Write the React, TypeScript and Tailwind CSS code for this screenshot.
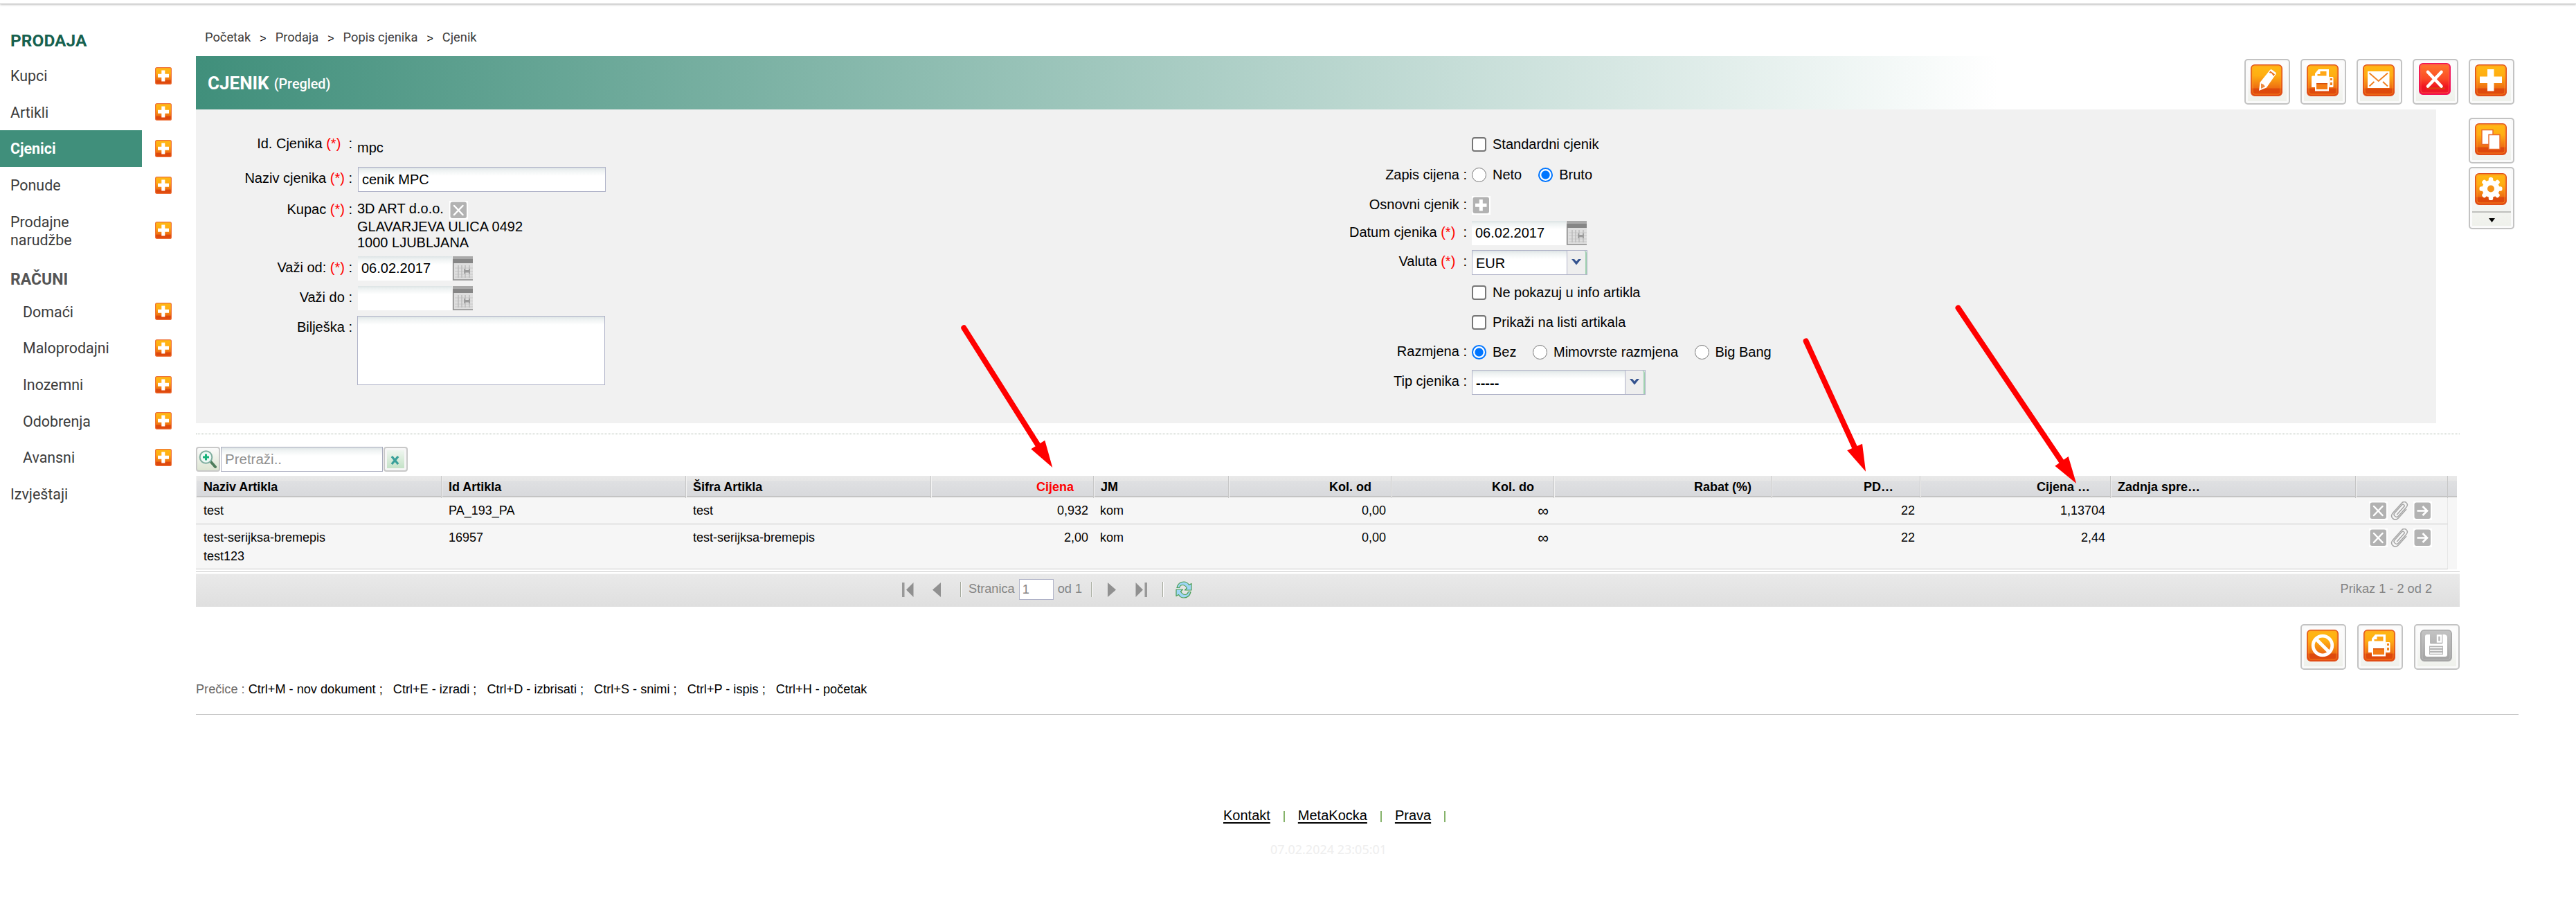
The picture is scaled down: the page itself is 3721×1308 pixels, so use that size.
import type { ReactNode } from 'react';
import clsx from 'clsx';

interface MenuItem {
  label: string;
  active?: boolean;
  indent?: boolean;
  tall?: boolean;
  noAdd?: boolean;
}

const salesMenu: MenuItem[] = [
  { label: 'Kupci' },
  { label: 'Artikli' },
  { label: 'Cjenici', active: true },
  { label: 'Ponude' },
  { label: 'Prodajne narudžbe', tall: true },
];

const invoiceMenu: MenuItem[] = [
  { label: 'Domaći', indent: true },
  { label: 'Maloprodajni', indent: true },
  { label: 'Inozemni', indent: true },
  { label: 'Odobrenja', indent: true },
  { label: 'Avansni', indent: true },
  { label: 'Izvještaji', noAdd: true },
];

const articles = [
  {
    name: ['test'],
    id: 'PA_193_PA',
    code: 'test',
    price: '0,932',
    unit: 'kom',
    from: '0,00',
    to: '∞',
    vat: '22',
    gross: '1,13704',
  },
  {
    name: ['test-serijksa-bremepis', 'test123'],
    id: '16957',
    code: 'test-serijksa-bremepis',
    price: '2,00',
    unit: 'kom',
    from: '0,00',
    to: '∞',
    vat: '22',
    gross: '2,44',
  },
];

const shortcuts = [
  'Ctrl+M - nov dokument',
  'Ctrl+E - izradi',
  'Ctrl+D - izbrisati',
  'Ctrl+S - snimi',
  'Ctrl+P - ispis',
  'Ctrl+H - početak',
];

const gridCols =
  'grid grid-cols-[355px_353px_354px_235px_195px_235px_235px_314px_215px_275px_354px_133px]';

/* ---------- Icons ---------- */

const Gradients = () => (
  <svg className="absolute h-0 w-0" aria-hidden="true">
    <defs>
      <linearGradient id="orange" x1="0" y1="0" x2="0" y2="1">
        <stop offset="0" stopColor="#ffb914" />
        <stop offset="0.35" stopColor="#ffae12" />
        <stop offset="0.74" stopColor="#ee6f12" />
        <stop offset="0.78" stopColor="#dd4a0c" />
        <stop offset="1" stopColor="#e0480c" />
      </linearGradient>
      <linearGradient id="red" x1="0" y1="0" x2="0" y2="1">
        <stop offset="0" stopColor="#ff7a2e" />
        <stop offset="0.5" stopColor="#fb4a26" />
        <stop offset="0.75" stopColor="#f01420" />
        <stop offset="1" stopColor="#ee1430" />
      </linearGradient>
      <linearGradient id="gray" x1="0" y1="0" x2="0" y2="1">
        <stop offset="0" stopColor="#c4c4c4" />
        <stop offset="1" stopColor="#a2a2a2" />
      </linearGradient>
    </defs>
  </svg>
);

interface TileProps {
  tone?: 'orange' | 'red' | 'gray';
  children: ReactNode;
}

const Tile = ({ tone = 'orange', children }: TileProps) => {
  const edge = { orange: '#e2501c', red: '#f2105a', gray: '#a8a8a8' }[tone];
  const inner = { orange: '#ff9a2a', red: '#ff5a4a', gray: '#c2c2c2' }[tone];
  return (
    <svg viewBox="0 0 46 46" className="h-[46px] w-[46px]" aria-hidden="true">
      <rect x="0.8" y="0.8" width="44.4" height="44.4" rx="5" fill={`url(#${tone})`} stroke={edge} strokeWidth="1.6" />
      <rect x="3" y="3" width="40" height="40" rx="3" fill="none" stroke={inner} strokeWidth="1" opacity="0.7" />
      {children}
    </svg>
  );
};

const PencilIcon = () => (
  <Tile>
    <path d="M12 38l1.500-12L28 8q1.200-1.400 2.600-.4l5.400 4q1.400 1.200.4 2.700L23 33.500z" fill="#fff" />
    <path d="M28.500 9.500l6.500 4.800-1.800 2.600-3-4.200-3.500-.8z" fill="#e8701c" />
    <path d="M15 27.500q3.500.3 6 4.500L15 35z" fill="#ee8a40" />
  </Tile>
);

const PrinterIcon = () => (
  <Tile>
    <path d="M12 18v-5l5-6h15v11z" fill="#fff" />
    <path d="M15.500 16v-2h4v-4h9v7h-13z" fill="#ffa716" />
    <path d="M7 18q0-1.500 1.500-1.500H31q1.500 0 1.500 1.500v15H7z" fill="#fff" />
    <path d="M32.500 18H37q1.500 0 1.500 1.500v12q0 1.500-1.500 1.500h-4.500z" fill="#fff" />
    <path d="M34 20h3v3h-3zM34 26h3v4h-3z" fill="#f08018" />
    <path d="M12 27h20v11.500H12z" fill="#fff" />
    <path d="M14 27h16v9H14z" fill="#f47c14" />
    <path d="M14 27h16v1.500H14z" fill="#d8500c" />
  </Tile>
);

const MailIcon = () => (
  <Tile>
    <path d="M7 10h31.500v24H7z" fill="#fff" />
    <path d="M9.500 12.500L22.800 24 36 12.500M9.500 31.500l7-6.500M36 31.500L29 25" fill="none" stroke="#f08020" strokeWidth="1.900" />
  </Tile>
);

const DeleteIcon = () => (
  <Tile tone="red">
    <path d="M11 36.500h27" stroke="#d84010" strokeWidth="2.500" />
    <path d="M13 13l19.500 20.500M32.500 13L13 33.500" stroke="#fff" strokeWidth="4.600" strokeLinecap="round" />
  </Tile>
);

const PlusIcon = () => (
  <Tile>
    <path d="M18 7h9.500v10.500H39V27H27.500v11.500H18V27H7v-9.500h11z" fill="#fff" />
  </Tile>
);

const CopyIcon = () => (
  <Tile>
    <path d="M10 9.500h16v21H10z" fill="#fff" stroke="#ea6a2a" strokeWidth="1.400" />
    <path d="M20 16.500h16v21H20z" fill="#fff" stroke="#ea6a2a" strokeWidth="1.400" />
  </Tile>
);

const GearIcon = () => (
  <Tile>
    <g fill="#fff">
      <circle cx="23" cy="22.500" r="12.500" />
      {[0, 45, 90, 135].map((angle) => (
        <rect key={angle} x="19.800" y="6" width="6.400" height="33" rx="2.600" transform={`rotate(${angle} 23 22.5)`} />
      ))}
    </g>
    <circle cx="23" cy="22.500" r="5" fill="#f59418" />
  </Tile>
);

const CancelIcon = () => (
  <Tile>
    <circle cx="23" cy="23" r="13.800" fill="none" stroke="#fff" strokeWidth="4.800" />
    <path d="M13.500 13.500l19 19" stroke="#fff" strokeWidth="5" />
  </Tile>
);

const SaveIcon = () => (
  <Tile tone="gray">
    <path d="M10 7h4v12q0 1.500 1.500 1.500H31q1.500 0 1.500-1.500V7h3q3.500 1 3.500 4v25q0 3-3 3H10q-3 0-3-3V10q0-3 3-3z" fill="#fff" />
    <path d="M25 8.500h5v9h-5z" fill="none" stroke="#fff" strokeWidth="2.400" />
    <path d="M13 23.500h20V36H13z" fill="#b4b4b4" />
    <path d="M14 26h18M14 30h18M14 34h18" stroke="#fff" strokeWidth="1.500" />
  </Tile>
);

const AddIcon = () => (
  <svg viewBox="0 0 24 25" className="h-[25px] w-6" aria-hidden="true">
    <rect x="0.600" y="0.600" width="22.800" height="23.800" rx="2" fill="url(#orange)" stroke="#ee7038" strokeWidth="1.200" />
    <path d="M9.300 4.500h5v5.300H20v5h-5.700v5.700h-5v-5.700H4v-5h5.300z" fill="#fff" />
  </svg>
);

// Small gray row buttons sit on a white square
const SmallIcon = ({ children }: { children: ReactNode }) => (
  <svg viewBox="0 0 27 27" className="h-[27px] w-[27px] shrink-0" aria-hidden="true">
    <rect width="27" height="27" fill="#fff" />
    <rect x="1.500" y="1.500" width="23.500" height="23.500" rx="3" fill="#b2b2b2" />
    {children}
  </svg>
);

const SmallClose = () => (
  <SmallIcon>
    <path d="M7 7l12.500 13M19.500 7L7 20" stroke="#fff" strokeWidth="2.500" strokeLinecap="round" />
  </SmallIcon>
);

const SmallPlus = () => (
  <SmallIcon>
    <path d="M10.800 5h5v5.800h5.700v5h-5.700v5.700h-5v-5.700H5v-5h5.800z" fill="#fff" />
  </SmallIcon>
);

const SmallArrow = () => (
  <SmallIcon>
    <path d="M5.500 13.500h14M13.500 7l6.500 6.500-6.500 6.500" fill="none" stroke="#fff" strokeWidth="2.700" />
  </SmallIcon>
);

const ClipIcon = () => (
  <svg viewBox="0 0 27 27" className="h-[27px] w-[27px]" fill="none" stroke="#a6a6a6" strokeWidth="1.500" strokeLinecap="round" aria-hidden="true">
    <g transform="rotate(42 13.5 13.5)">
      <path d="M10 5v16q0 3 3.500 3t3.500-3V3.500Q17-1.500 12.500-1.500T8 3.500V22q0 6.500 5.500 6.500T19 22V6" />
      <path d="M10 5q0-2 2-2t2 2v15" />
    </g>
  </svg>
);

const CalendarIcon = () => (
  <svg viewBox="0 0 29 35" className="h-[35px] w-[29px]" aria-hidden="true">
    <rect width="29" height="35" fill="#dedede" />
    <rect width="29" height="4" fill="#a9a9a9" />
    <rect y="4" width="29" height="6" fill="#868686" />
    <path d="M0.800 10v24H29" fill="none" stroke="#8e8e8e" strokeWidth="1.600" />
    <path d="M3 17h26M3 21.500h26M3 26h26M3 30h26" stroke="#c8c8c8" strokeWidth="1" />
    <path d="M8 13v18M13 13v18M18 13v18M24 13v18" stroke="#bababa" strokeWidth="1.400" />
    <path d="M17 18v7M24 18v7" stroke="#9c9c9c" strokeWidth="1.800" />
    <rect x="17" y="20" width="7" height="3.500" fill="#9c9c9c" />
  </svg>
);

const RefreshIcon = () => (
  <svg viewBox="0 0 24 25" className="h-[25px] w-6" aria-hidden="true">
    <g fill="#9fd6f5" stroke="#4b9d54" strokeWidth="1.200" strokeLinejoin="round">
      <path d="M2 9.500Q4 1 12 1q5 0 7.500 4.500L23 3.500V13h-9.500l3-3Q14 5.500 10 5.500q-3 0-4.500 4z" />
      <path d="M22 15.500Q20 24 12 24q-5 0-7.500-4.500L1 21.500V12h9.500l-3 3q2.500 4.500 6.500 4.500 3 0 4.500-4z" />
    </g>
  </svg>
);

/* ---------- Form pieces ---------- */

const ToolButton = ({ children, raised }: { children: ReactNode; raised?: boolean }) => (
  <button
    type="button"
    className={clsx(
      'flex h-[66px] w-[66px] items-start rounded-[5px] border-2 border-[#c3c3c3] bg-white bg-[linear-gradient(#fdfdfd_0,#fafafa_30%,#eef0ea_100%)] pl-[7px] shadow-[inset_0_0_0_3px_#fafafa]',
      raised ? 'pt-[4px]' : 'pt-[6px]',
    )}
  >
    {children}
  </button>
);

interface RowProps {
  label?: string;
  required?: boolean;
  wide?: boolean;
  className: string;
  labelClass: string;
  children?: ReactNode;
}

const Row = ({ label, required, wide, className, labelClass, children }: RowProps) => (
  <div className={clsx('flex', className)}>
    <div className={clsx('shrink-0 text-right leading-8 whitespace-pre', labelClass)}>
      {label}
      {required && <span className="text-[#f00]"> (*)</span>}
      {label && (wide ? '\u00a0 :' : ' :')}
    </div>
    {children}
  </div>
);

const LeftRow = (props: Omit<RowProps, 'labelClass'>) => <Row {...props} labelClass="w-[226px] mr-2" />;
const RightRow = (props: Omit<RowProps, 'labelClass'>) => <Row {...props} labelClass="w-[219px] mr-[7px]" />;

const fieldShade = 'bg-[linear-gradient(#dde4e5_0,#eef2f2_4px,#fff_12px)]';

const DateField = ({ value }: { value: string }) => (
  <div className="flex h-[35px]">
    <input readOnly value={value} className={clsx('mr-px h-[35px] w-[136px] pl-[5px] text-[20px] outline-none', fieldShade)} />
    <CalendarIcon />
  </div>
);

const SelectField = ({ value, className }: { value: string; className: string }) => (
  <div className={clsx('flex h-9 border border-[#b0b3c8]', fieldShade, className)}>
    <span className="flex-1 pl-[5px] leading-9">{value}</span>
    <span className="flex w-[29px] items-center justify-center rounded-tr-[4px] border-l border-r-2 border-l-[#b0b3c8] border-r-[#9fd0b0] bg-[#eee]">
      <svg viewBox="0 0 16 10" className="mb-0.5 h-[10px] w-4" aria-hidden="true">
        <path d="M1 1h4l3 3.500L11 1h4L8 9.500z" fill="#34538f" />
      </svg>
    </span>
  </div>
);

const Check = ({ label }: { label: string }) => (
  <label className="flex h-8 items-center leading-8">
    <input type="checkbox" className="mr-[9px] h-[21px] w-[21px] appearance-none rounded-[4px] border-2 border-[#767676] bg-white" />
    {label}
  </label>
);

const Radio = ({ name, label, checked }: { name: string; label: string; checked?: boolean }) => (
  <label className="flex h-8 items-center leading-8">
    <input
      type="radio"
      name={name}
      defaultChecked={checked}
      className="mr-[9px] h-[21px] w-[21px] appearance-none rounded-full border-[1.5px] border-[#767676] bg-white checked:border-2 checked:border-[#0075ff] checked:bg-[radial-gradient(circle,#0075ff_5.6px,#fff_6.6px)]"
    />
    {label}
  </label>
);

/* ---------- Sections ---------- */

const MenuRow = ({ item }: { item: MenuItem }) => (
  <li className={clsx('flex items-center', item.tall ? 'h-[79px]' : 'h-[52.6px]')}>
    <a
      href="#"
      className={clsx(
        'mr-[19px] flex h-full w-[205px] items-center pt-0.5 leading-[26px]',
        item.indent ? 'pl-[33px]' : 'pl-[15px]',
        item.tall && 'pr-24',
        item.active && 'bg-[#408f7b] font-bold text-white',
      )}
    >
      {item.label}
    </a>
    {!item.noAdd && <AddIcon />}
  </li>
);

const Sidebar = () => (
  <nav className="w-[283px] shrink-0 pt-[26px] font-['Roboto',sans-serif] text-[21.4px] text-[#3c3c3c]">
    <h2 className="h-[51px] pl-[15px] text-[24.5px] leading-[54px] font-bold text-[#17614f]">PRODAJA</h2>
    <ul>
      {salesMenu.map((item) => (
        <MenuRow key={item.label} item={item} />
      ))}
    </ul>
    <h2 className="h-[51.2px] pl-[15px] text-[23px] leading-[64px] font-bold text-[#555]">RAČUNI</h2>
    <ul>
      {invoiceMenu.map((item) => (
        <MenuRow key={item.label} item={item} />
      ))}
    </ul>
  </nav>
);

const Breadcrumbs = () => (
  <div className="flex h-[75px] items-start gap-[13px] pt-8 pl-[13px] font-['Roboto',sans-serif] text-[18.3px] leading-8 text-[#3c3c3c]">
    {['Početak', 'Prodaja', 'Popis cjenika', 'Cjenik'].map((crumb, i) => (
      <span key={crumb} className="flex gap-[13px]">
        {i > 0 && <span className="pt-0.5 font-['Liberation_Sans',sans-serif] text-[16px] text-black">&gt;</span>}
        {crumb}
      </span>
    ))}
  </div>
);

const TitleBar = () => (
  <div className="flex h-[77px]">
    <div className="flex w-[2959px] items-center bg-[linear-gradient(90deg,#408f7b_0,#fff_88%)] pt-0.5 pl-[17px] font-['Roboto',sans-serif] text-white">
      <h1 className="text-[26px] leading-[75px] font-bold">CJENIK</h1>
      <span className="pt-0.5 pl-[7px] text-[19.8px] font-medium">(Pregled)</span>
    </div>
    <div className="flex gap-[15px] pt-1">
      <ToolButton>
        <PencilIcon />
      </ToolButton>
      <ToolButton>
        <PrinterIcon />
      </ToolButton>
      <ToolButton>
        <MailIcon />
      </ToolButton>
      <ToolButton raised>
        <DeleteIcon />
      </ToolButton>
      <ToolButton>
        <PlusIcon />
      </ToolButton>
    </div>
  </div>
);

const PriceListForm = () => (
  <form className="flex h-[453px] w-[3236px] bg-[#f1f1f1] text-[20px] leading-6">
    <div className="w-[1617px] pt-[33px]">
      <LeftRow label="Id. Cjenika" required wide className="h-[50px]">
        <span className="-ml-px pt-[10px]">mpc</span>
      </LeftRow>
      <LeftRow label="Naziv cjenika" required className="h-[45px]">
        <input readOnly value="cenik MPC" className={clsx('h-9 w-[358px] border border-[#b0b3c8] pl-[5px] outline-none', fieldShade)} />
      </LeftRow>
      <LeftRow label="Kupac" required className="h-[84px]">
        <div className="-ml-px pt-1">
          <div className="flex gap-2 leading-[22px]">
            3D ART d.o.o. <SmallClose />
          </div>
          <div className="-mt-px leading-[23px]">GLAVARJEVA ULICA 0492</div>
          <div className="leading-[23px]">1000 LJUBLJANA</div>
        </div>
      </LeftRow>
      <LeftRow label="Važi od:" required className="h-[43px]">
        <DateField value="06.02.2017" />
      </LeftRow>
      <LeftRow label="Važi do" className="h-[43px]">
        <DateField value="" />
      </LeftRow>
      <LeftRow label="Bilješka" className="h-[100px]">
        <textarea readOnly className={clsx('-ml-px h-[100px] w-[358px] resize-none border border-[#b0b3c8] outline-none', fieldShade)} />
      </LeftRow>
    </div>

    <div className="pt-[34px]">
      <RightRow className="h-[44px]">
        <Check label="Standardni cjenik" />
      </RightRow>
      <RightRow label="Zapis cijena" className="h-[43px]">
        <div className="flex gap-6">
          <Radio name="zapis" label="Neto" />
          <Radio name="zapis" label="Bruto" checked />
        </div>
      </RightRow>
      <RightRow label="Osnovni cjenik" className="h-10">
        <div className="pt-1">
          <SmallPlus />
        </div>
      </RightRow>
      <RightRow label="Datum cjenika" required wide className="h-[42px]">
        <DateField value="06.02.2017" />
      </RightRow>
      <RightRow label="Valuta" required wide className="h-[45px]">
        <SelectField value="EUR" className="w-[167px]" />
      </RightRow>
      <RightRow className="h-[43px]">
        <Check label="Ne pokazuj u info artikla" />
      </RightRow>
      <RightRow className="h-[42px]">
        <Check label="Prikaži na listi artikala" />
      </RightRow>
      <RightRow label="Razmjena" className="h-[43px]">
        <div className="flex gap-[23.5px] pt-px">
          <Radio name="razmjena" label="Bez" checked />
          <Radio name="razmjena" label="Mimovrste razmjena" />
          <Radio name="razmjena" label="Big Bang" />
        </div>
      </RightRow>
      <RightRow label="Tip cjenika" className="h-9">
        <SelectField value="-----" className="w-[251px] font-bold" />
      </RightRow>
    </div>
  </form>
);

const SideTools = () => (
  <div className="ml-[47px] flex flex-col gap-[5px] pt-3">
    <ToolButton>
      <CopyIcon />
    </ToolButton>
    <button
      type="button"
      className="flex h-[90px] w-[66px] flex-col rounded-[5px] border-2 border-[#c3c3c3] bg-[linear-gradient(#fdfdfd_0,#fafafa_30%,#eef0ea_100%)] pt-[7px] shadow-[inset_0_0_0_3px_#fafafa]"
    >
      <span className="pl-[7px]">
        <GearIcon />
      </span>
      <span className="mx-[3px] mt-[9px] flex w-[56px] justify-center border-t-2 border-[#bfc0bd] pt-2">
        <svg viewBox="0 0 9 6" className="h-1.5 w-[9px]" aria-hidden="true">
          <path d="M0 0h9L4.500 6z" fill="#000" />
        </svg>
      </span>
    </button>
  </div>
);

const SearchBox = () => (
  <div className="flex h-9">
    <button type="button" className="flex w-[35px] items-center rounded-[4px] border-2 border-[#c8c8c8] bg-[linear-gradient(#fafafa,#dde5d2)] pl-0.5">
      <svg viewBox="0 0 26 28" className="h-7 w-[26px]" aria-hidden="true">
        <path d="M16.500 16.500L24 25" stroke="#4f7d5c" strokeWidth="4" strokeLinecap="round" />
        <circle cx="10.500" cy="11" r="8.800" fill="#eef9f5" stroke="#7fae9f" strokeWidth="2" />
        <path d="M10.500 6.500v9M6 11h9" stroke="#16b27a" strokeWidth="3" />
      </svg>
    </button>
    <input placeholder="Pretraži.." className={clsx('mx-px h-9 w-[234px] border border-[#a9acbe] pl-[5px] text-[20.5px] outline-none placeholder:text-[#8f8f8f]', fieldShade)} />
    <button type="button" className="flex w-[35px] items-center justify-center rounded-[4px] border-2 border-[#c8c8c8] bg-[linear-gradient(#f4f8f4,#bfe0c2)] pr-0.5 shadow-[inset_0_0_0_3px_#f6f6f6]">
      <svg viewBox="0 0 14 14" className="mt-0.5 h-[13px] w-[13px]" aria-hidden="true">
        <path d="M2 1l10 12M12 1L2 13" stroke="#3aa09a" strokeWidth="3.400" />
      </svg>
    </button>
  </div>
);

const HeadCell = ({ children, className }: { children?: ReactNode; className?: string }) => (
  <div className={clsx('border-r border-[#c6c6c6] pl-[10px] shadow-[inset_1px_0_0_#f2f2f2]', className)}>{children}</div>
);

const ArticleTable = () => (
  <div className="w-[3266px] bg-[#f6f6f6] text-[18px]">
    <div className={clsx('h-[31px] border-b-2 border-[#c4c4c4] bg-[linear-gradient(#e9e9e9_0,#e6e6e6_25%,#dfe0e2_26%,#d8d9dc_100%)] leading-[32px] font-bold', gridCols)}>
      <HeadCell className="pl-[11px]">Naziv Artikla</HeadCell>
      <HeadCell>Id Artikla</HeadCell>
      <HeadCell>Šifra Artikla</HeadCell>
      <HeadCell className="pr-7 text-right text-[#f00]">Cijena</HeadCell>
      <HeadCell>JM</HeadCell>
      <HeadCell className="pr-7 text-right">Kol. od</HeadCell>
      <HeadCell className="pr-7 text-right">Kol. do</HeadCell>
      <HeadCell className="pr-7 text-right">Rabat (%)</HeadCell>
      <HeadCell className="pr-[38px] text-right">PD…</HeadCell>
      <HeadCell className="pr-[29px] text-right">Cijena …</HeadCell>
      <HeadCell className="pl-[9px]">Zadnja spre…</HeadCell>
      <HeadCell />
    </div>
    {articles.map((row) => (
      <div key={row.id} className={clsx('w-[3253px] border-r border-b border-r-[#e6e6e6] border-b-[#c8c8c8] pt-[6px] leading-[27px]', row.name.length > 1 ? 'h-[65px]' : 'h-[39px]', gridCols)}>
        <div className="pl-[11px]">
          {row.name.map((line) => (
            <div key={line}>{line}</div>
          ))}
        </div>
        <div className="pl-[10px]">{row.id}</div>
        <div className="pl-[10px]">{row.code}</div>
        <div className="pr-2 text-right">{row.price}</div>
        <div className="pl-[9px]">{row.unit}</div>
        <div className="pr-2 text-right">{row.from}</div>
        <div className="pr-2 text-right text-[22px]">{row.to}</div>
        <div />
        <div className="pr-2 text-right">{row.vat}</div>
        <div className="pr-2 text-right">{row.gross}</div>
        <div />
        <div className="flex pl-[19px]">
          <SmallClose />
          <span className="mr-[6px] ml-1">
            <ClipIcon />
          </span>
          <SmallArrow />
        </div>
      </div>
    ))}
  </div>
);

const PagerLine = ({ className }: { className: string }) => (
  <span className={clsx('h-[22px] w-[2px] border-r border-l border-r-white border-l-[#a5a99c]', className)} />
);

const Pager = () => (
  <div className="mt-[3px] flex h-[51px] w-[3270px] items-center border-t border-[#ccc] bg-[linear-gradient(#fff_0,#fff_2px,#e9e9e9_3px,#dfdfdf_100%)] text-[18.2px] text-[#848484]">
    <svg viewBox="0 0 18 21" className="ml-[1019px] h-[21px] w-[18px]" aria-hidden="true">
      <path d="M1 0h3.500v21H1z" fill="#999" />
      <path d="M17.500 0v21L7 10.500z" fill="#909090" />
    </svg>
    <svg viewBox="0 0 12 21" className="ml-[27px] h-[21px] w-3" aria-hidden="true">
      <path d="M12 0v21L0 10.500z" fill="#909090" />
    </svg>
    <PagerLine className="ml-[28px]" />
    <span className="ml-[10px]">Stranica</span>
    <input readOnly value="1" className="ml-[6px] h-[30px] w-[50px] border border-[#b0b3c8] bg-white pl-1 outline-none" />
    <span className="ml-[6px]">od 1</span>
    <PagerLine className="ml-[13px]" />
    <svg viewBox="0 0 12 21" className="ml-[22px] h-[21px] w-3" aria-hidden="true">
      <path d="M0 0v21l12-10.500z" fill="#909090" />
    </svg>
    <svg viewBox="0 0 18 21" className="ml-[28px] h-[21px] w-[18px]" aria-hidden="true">
      <path d="M.5 0v21L11 10.500z" fill="#909090" />
      <path d="M13.500 0H17v21h-3.500z" fill="#999" />
    </svg>
    <PagerLine className="mr-[17px] ml-[21px]" />
    <RefreshIcon />
    <span className="ml-auto pr-10">Prikaz 1 - 2 od 2</span>
  </div>
);

const Footer = () => (
  <footer className="pt-[129px] text-[20px]">
    <div className="flex h-8 items-center gap-[19px] pl-[1484px] leading-8">
      {['Kontakt', 'MetaKocka', 'Prava'].map((link) => (
        <span key={link} className="flex items-center gap-[19px]">
          <a href="#" className="underline decoration-2 underline-offset-[3px]">
            {link}
          </a>
          <span className="mt-1 h-4 w-0.5 bg-[#86b36b]" />
        </span>
      ))}
    </div>
    <div className="pt-[17px] pl-[1552px] font-['Noto_Sans',sans-serif] text-[18px] leading-8 text-[#eee]">07.02.2024 23:05:01</div>
  </footer>
);

// Red pointers drawn over the page towards the price columns
const Pointers = () => (
  <svg className="pointer-events-none absolute top-0 left-0 h-[1308px] w-[3721px]" viewBox="0 0 3721 1308" aria-hidden="true">
    <g stroke="#f00" strokeWidth="8" strokeLinecap="round">
      <path d="M1392.300 473.300L1499 642" />
      <path d="M2608.700 492.500L2680 648" />
      <path d="M2828.500 444.500L2979 668" />
    </g>
    <g fill="#f00">
      <path d="M1520.300 675l-31-26.700 20-12.600z" />
      <path d="M2695 680.700l-26.800-30.400 21.800-9.600z" />
      <path d="M2999.200 698l-30.800-25.300 19.300-13.700z" />
    </g>
  </svg>
);

const App = () => {
  return (
    <div className="relative h-[1308px] w-[3721px] overflow-hidden bg-white font-['Liberation_Sans',Arial,sans-serif] text-black">
      <Gradients />
      <div className="h-1.5 border-b border-[#cfcfcf] shadow-[0_1px_3px_rgba(0,0,0,0.25)]" />
      <div className="flex">
        <Sidebar />
        <main className="flex-1">
          <Breadcrumbs />
          <TitleBar />
          <div className="flex">
            <PriceListForm />
            <SideTools />
          </div>
          <div className="mt-[15px] mb-[18px] w-[3270px] border-t border-dotted border-[#a9b5a9]" />
          <SearchBox />
          <div className="mt-1.5">
            <ArticleTable />
            <Pager />
          </div>
          <div className="flex w-[3270px] justify-end gap-4 pt-[25px]">
            <ToolButton>
              <CancelIcon />
            </ToolButton>
            <ToolButton>
              <PrinterIcon />
            </ToolButton>
            <ToolButton>
              <SaveIcon />
            </ToolButton>
          </div>
          <div className="mt-[12px] w-[3355px] border-b border-[#c8c8c8] pb-[20px] text-[18.150px] leading-8 whitespace-pre">
            <span className="text-[#6b6b6b]">Prečice : </span>
            {shortcuts.join(' ;\u00a0\u00a0 ')}
          </div>
          <Footer />
        </main>
      </div>
      <Pointers />
    </div>
  );
};

export default App;
